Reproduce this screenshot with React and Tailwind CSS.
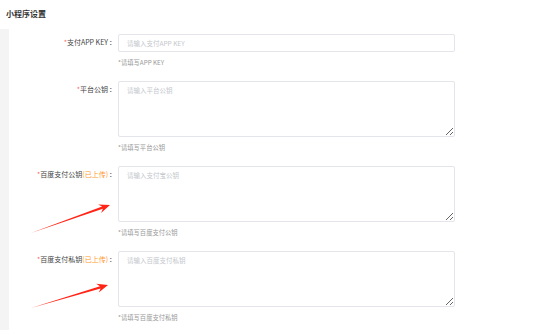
import React from "react";

const font = { fontFamily: '"Noto Sans CJK SC", "Noto Sans", sans-serif' };

function Row({ label, uploaded, placeholder, help, area }) {
  return (
    <div className="flex">
      <div className="w-[107px] shrink-0 text-right text-[7px] leading-[16px] text-[#444]">
        <span className="text-[#f56c6c]">*</span>
        {label}
        {uploaded && <span className="text-[#ff9a2e]">(已上传)</span>}
        <span className="ml-[1px]">：</span>
      </div>
      <div className="ml-[2px] w-[337px]">
        {area ? (
          <textarea
            placeholder={placeholder}
            className="block w-full h-[56px] border border-[#e3e5ea] rounded-[2px] px-[8px] py-[3px] text-[6.5px] leading-[10px] placeholder:text-[#c4c7cc] outline-none resize-y bg-white"
          />
        ) : (
          <input
            placeholder={placeholder}
            className="block w-full h-[18px] border border-[#e3e5ea] rounded-[2px] px-[8px] text-[6.5px] placeholder:text-[#c4c7cc] outline-none bg-white"
          />
        )}
        <div className="mt-[6px] h-[9px] leading-[9px] text-[6.3px] text-[#999] mb-[14px]">
          *{help}
        </div>
      </div>
    </div>
  );
}

export default function App() {
  return (
    <div className="relative w-[554px] h-[330px] bg-white overflow-hidden" style={font}>
      <div className="h-[29px] pl-[6px] pt-[8px] text-[8px] leading-[12px] font-bold text-[#333]">
        小程序设置
      </div>
      <div className="flex h-[301px]">
        <div className="w-[9px] bg-[#f4f4f5] shrink-0" />
        <div className="pt-[5px] [&_textarea]:font-[inherit] [&_input]:font-[inherit]" style={font}>
          <Row label="支付APP KEY" placeholder="请输入支付APP KEY" help="请填写APP KEY" />
          <Row label="平台公钥" placeholder="请输入平台公钥" help="请填写平台公钥" area />
          <Row label="百度支付公钥" uploaded placeholder="请输入支付宝公钥" help="请填写百度支付公钥" area />
          <Row label="百度支付私钥" uploaded placeholder="请输入百度支付私钥" help="请填写百度支付私钥" area />
        </div>
      </div>
      <svg
        className="absolute left-0 top-0 pointer-events-none"
        width="554"
        height="330"
        viewBox="0 0 554 330"
      >
        <polygon
          fill="#ff2416"
          points="31,233 102.9,208.8 101.1,212.9 110,205 98.1,204.5 102.1,206.6"
        />
        <polygon
          fill="#ff2416"
          points="31,308 100.6,288.4 98.8,292.4 108,285 96.2,283.8 100,286.2"
        />
      </svg>
    </div>
  );
}
